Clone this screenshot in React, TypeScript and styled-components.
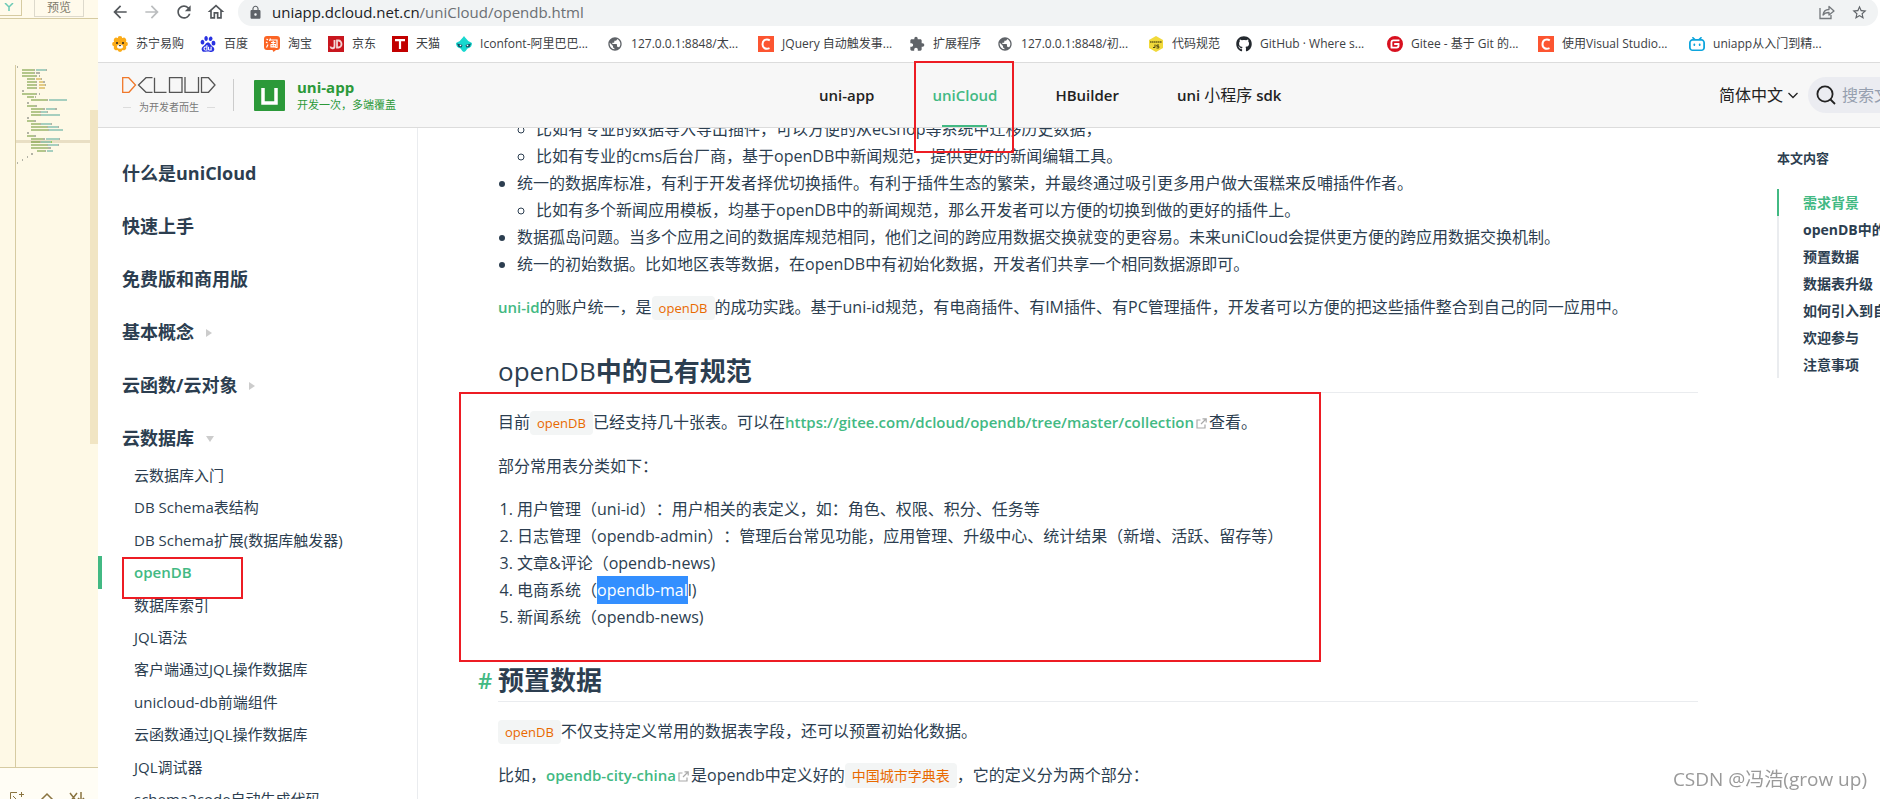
import React from 'react';
import styled, { createGlobalStyle } from 'styled-components';
import {
  MdArrowBack,
  MdArrowForward,
  MdRefresh,
  MdOutlineHome,
  MdLock,
  MdExtension,
  MdPublic,
  MdStarBorder,
} from 'react-icons/md';
import { SiBaidu, SiGitee, SiBilibili } from 'react-icons/si';
import { FaGithub } from 'react-icons/fa';

const GREEN = '#42b983';
const INK = '#2c3e50';
const LINE = '#eaecef';

const GlobalStyle = createGlobalStyle`
  *, *::before, *::after { box-sizing: border-box; }
  html, body, #root { height: 100%; }
  body {
    margin: 0;
    overflow: hidden;
    background: #fff;
    color: ${INK};
    font-family: 'Open Sans', 'Noto Sans', 'Noto Sans CJK SC', sans-serif;
    font-size: 16px;
    line-height: 27px;
    text-spacing-trim: space-all;
  }
  a { color: inherit; text-decoration: none; }
  button { font: inherit; color: inherit; background: none; border: 0; padding: 0; }
  ul, ol { margin: 0; padding: 0; }
  svg { display: block; flex-shrink: 0; }
`;

const Screen = styled.div`
  display: flex;
  height: 100vh;
  overflow: hidden;
`;

/* ---------- editor strip ---------- */

const Editor = styled.aside`
  display: flex;
  flex-direction: column;
  flex: 0 0 98px;
  background: #fef9e6;
  overflow: hidden;
`;

const EditorTabs = styled.div`
  display: flex;
  gap: 12px;
  height: 19px;
  flex-shrink: 0;
  border-bottom: 1px solid #d6cba2;
  background: #fffaeb;
`;

const FilterTab = styled.button`
  width: 22px;
  height: 16px;
  border-right: 1px solid #d6cba2;
  border-bottom: 1px solid #d6cba2;
`;

const PreviewTab = styled.button`
  width: 50px;
  height: 17px;
  border: 1px solid #ddd9cc;
  border-top: 0;
  color: #807a6c;
  font-size: 12px;
  line-height: 8px;
`;

const EditorBody = styled.div`
  display: flex;
  justify-content: space-between;
  flex: 1;
  min-height: 0;
`;

const Gutter = styled.div`
  flex: 1;
  margin-left: 15px;
  margin-top: 46px;
  border-left: 1px solid #d6cba2;
`;

const EditorThumb = styled.div`
  width: 8px;
  height: 334px;
  margin-top: 91px;
  background: #f1e5c3;
`;

const EditorFooter = styled.div`
  display: flex;
  gap: 14px;
  height: 32px;
  padding: 24px 0 0 9px;
  flex-shrink: 0;
  border-top: 1px solid #d6cba2;
  background: #fffdf5;
  color: #8a7440;
`;

type Seg = [number, number, string];
const G = '#b3c68a';
const S = '#b3b3a6';
const T = '#a6cfbf';
const Y = '#e3cb84';

const MAP: Seg[][] = [
  [[51, 54, S]],
  [[66, 102, G], [102, 105, S], [108, 138, T], [138, 141, S]],
  [[66, 102, G], [102, 105, S], [108, 120, S]],
  [[66, 108, G], [108, 111, S], [117, 120, S]],
  [[81, 102, G], [102, 105, S], [108, 123, Y], [123, 126, S]],
  [[81, 108, G], [108, 111, S], [117, 129, Y], [129, 135, S]],
  [[81, 108, G], [108, 111, S], [117, 135, Y], [135, 138, S]],
  [[81, 108, G], [108, 111, S], [117, 135, Y]],
  [[66, 72, S]],
  [[66, 108, G], [108, 111, S], [117, 120, S]],
  [[81, 102, G], [105, 108, S]],
  [[93, 141, G], [141, 144, S], [147, 201, T]],
  [[81, 87, S]],
  [[81, 105, G], [105, 111, S]],
  [[93, 129, G], [129, 135, S], [138, 165, T], [165, 171, S]],
  [[93, 120, G], [120, 123, S], [123, 141, T], [141, 144, S]],
  [[93, 120, G], [120, 123, S], [123, 180, T]],
  [[81, 87, S]],
  [[81, 102, G], [102, 108, S]],
  [[93, 120, G], [120, 123, S], [123, 153, T], [153, 156, S]],
  [[93, 141, G], [141, 144, S], [144, 174, T], [174, 177, S]],
  [[93, 144, G], [144, 147, S], [147, 189, T]],
  [[81, 87, S]],
  [[81, 102, G], [102, 108, S]],
  [[93, 129, G], [129, 135, S], [138, 177, T], [177, 180, S]],
  [[93, 120, '#a3b673'], [120, 123, S], [123, 153, '#9cc4ab'], [153, 156, '#8fce5a']],
  [[93, 141, G], [141, 144, S], [144, 174, T], [174, 177, S]],
  [[93, 144, G], [144, 153, S]],
  [[111, 135, G], [135, 138, S], [141, 159, T]],
  [[93, 99, S]],
  [[81, 84, S]],
  [[66, 69, S]],
  [[51, 54, S]],
];

/* ---------- browser chrome ---------- */

const Browser = styled.div`
  display: flex;
  flex-direction: column;
  flex: 1;
  min-width: 0;
`;

const Toolbar = styled.div`
  display: flex;
  align-items: center;
  height: 28px;
  margin-top: -2px;
  flex-shrink: 0;
  padding: 0 2px 0 12px;
  color: #5f6368;
`;

const ToolButton = styled.button<{ $dim?: boolean }>`
  display: flex;
  width: 20px;
  margin-right: 12px;
  color: ${(p) => (p.$dim ? '#bbbdbf' : '#53575b')};
`;

const Address = styled.div`
  display: flex;
  align-items: center;
  flex: 1;
  height: 28px;
  padding: 0 10px;
  border-radius: 14px;
  background: #f1f3f4;
`;

const AddressText = styled.span`
  flex: 1;
  margin-left: 9px;
  color: #6b6f73;
  font-size: 15px;
  line-height: 20px;
  b {
    color: #202124;
    font-weight: 400;
  }
`;

const AddressActions = styled.div`
  display: flex;
  gap: 16px;
`;

const Bookmarks = styled.nav`
  display: flex;
  align-items: center;
  gap: 16px;
  height: 37px;
  flex-shrink: 0;
  padding: 0 14px;
  border-bottom: 1px solid #dcdcdc;
  background: #fff;
`;

const Bookmark = styled.a<{ $long?: boolean }>`
  display: flex;
  align-items: center;
  gap: 8px;
  flex-shrink: 0;
  width: ${(p) => (p.$long ? '135px' : 'auto')};
  color: #3c4043;
  font-size: 12px;
  line-height: 16px;
  white-space: nowrap;
`;

/* ---------- site header ---------- */

const Header = styled.header`
  position: relative;
  z-index: 2;
  display: flex;
  align-items: center;
  height: 65px;
  flex-shrink: 0;
  border-bottom: 1px solid #dcdcdc;
  background: #f7f7f7;
`;

const Brand = styled.a`
  display: flex;
  align-items: center;
  flex: 0 0 721px;
  padding-left: 24px;
`;

const DcloudMark = styled.span`
  display: flex;
  flex-direction: column;
  align-items: center;
  width: 94px;
  gap: 8px;
`;

const Slogan = styled.span`
  display: flex;
  align-items: center;
  gap: 8px;
  color: #777;
  font-size: 10px;
  line-height: 12px;
  &::before,
  &::after {
    content: '';
    width: 8px;
    height: 1px;
    background: #dcdcdc;
  }
`;

const BrandRule = styled.span`
  width: 1px;
  height: 32px;
  margin: 0 20px 0 17px;
  background: #ccc;
`;

const BrandText = styled.span`
  display: flex;
  flex-direction: column;
  margin-left: 12px;
  color: #2b9939;
  font-size: 11px;
  line-height: 16px;
  b {
    font-size: 15px;
    line-height: 20px;
  }
`;

const SiteNav = styled.nav`
  display: flex;
  align-items: center;
  gap: 58px;
  height: 100%;
  color: #222;
  font-size: 15px;
  font-weight: 600;
  white-space: nowrap;
`;

const SiteLink = styled.a<{ $active?: boolean }>`
  position: relative;
  display: flex;
  align-items: center;
  gap: 4px;
  height: 64px;
  color: ${(p) => (p.$active ? GREEN : 'inherit')};
  em {
    font-size: 16px;
    font-style: normal;
    font-weight: 400;
  }
  &::after {
    content: '';
    display: ${(p) => (p.$active ? 'block' : 'none')};
    position: absolute;
    left: 10px;
    right: 10px;
    bottom: 0;
    height: 2px;
    background: ${GREEN};
  }
`;

const HeaderTools = styled.div`
  display: flex;
  align-items: center;
  gap: 10px;
  margin-left: auto;
`;

const Language = styled.button`
  display: flex;
  align-items: center;
  gap: 5px;
  color: #222;
  font-size: 16px;
`;

const Search = styled.label`
  display: flex;
  align-items: center;
  gap: 6px;
  width: 72px;
  height: 36px;
  padding-left: 8px;
  border-radius: 18px 0 0 18px;
  background: #ebecf1;
  input {
    flex: 1;
    min-width: 0;
    padding: 0;
    border: 0;
    outline: 0;
    background: none;
    font: inherit;
  }
  input::placeholder {
    color: #969faf;
    opacity: 1;
  }
`;

/* ---------- page body ---------- */

const Body = styled.div`
  display: flex;
  flex: 1;
  min-height: 0;
  overflow: hidden;
`;

const Sidebar = styled.nav`
  flex: 0 0 320px;
  padding-top: 19px;
  border-right: 1px solid ${LINE};
`;

const Group = styled.button`
  display: flex;
  align-items: center;
  gap: 12px;
  width: 100%;
  height: 53px;
  padding-left: 24px;
  font-size: 18px;
  font-weight: 700;
`;

const SubList = styled.ul`
  display: grid;
  grid-auto-rows: 1fr;
  height: 357px;
  margin-top: -6px;
  list-style: none;
`;

const SubItem = styled.li<{ $active?: boolean }>`
  position: relative;
  display: flex;
  align-items: center;
  padding-left: 32px;
  border-left: 4px solid ${(p) => (p.$active ? GREEN : 'transparent')};
  color: ${(p) => (p.$active ? GREEN : 'inherit')};
  font-size: 15px;
  font-weight: ${(p) => (p.$active ? 600 : 400)};
`;

const Main = styled.main`
  flex: 1;
  min-width: 0;
  margin-top: -12px;
  padding: 0 79px 0 80px;
  white-space: nowrap;
`;

const List = styled.ul`
  padding-left: 19px;
`;

const Continued = styled.li`
  list-style: none;
`;

const Numbered = styled.ol`
  padding-left: 19px;
`;

const Para = styled.p`
  margin: 16px 0;
`;

const Heading = styled.h2`
  position: relative;
  margin: 33px 0 16px;
  padding-bottom: 4px;
  border-bottom: 1px solid ${LINE};
  font-size: 26px;
  line-height: 33px;
  font-weight: 700;
  span {
    font-weight: 500;
  }
`;

const Hash = styled.a`
  position: absolute;
  left: -20px;
  color: ${GREEN};
  font-size: 22px;
  font-weight: 600;
`;

const Code = styled.code<{ $cjk?: boolean }>`
  padding: 3px 7px;
  border-radius: 4px;
  background: #f3f5f5;
  color: #e96900;
  font-family: inherit;
  font-size: ${(p) => (p.$cjk ? 14 : 13)}px;
`;

const DocLink = styled.a`
  color: ${GREEN};
  font-size: 15px;
  font-weight: 600;
  svg {
    display: inline-block;
    margin: 0 2px;
    vertical-align: -1px;
  }
`;

const Selected = styled.mark`
  padding: 3px 0;
  background: #338fff;
  color: #fff;
`;

const Section = styled.section`
  position: relative;
`;

const Toc = styled.nav`
  flex: 0 0 103px;
  padding-top: 17px;
  overflow: hidden;
  font-size: 14px;
  font-weight: 700;
  white-space: nowrap;
`;

const TocTitle = styled.div`
  margin-bottom: 17px;
  font-size: 13px;
`;

const TocItem = styled.a<{ $active?: boolean }>`
  display: block;
  padding-left: 24px;
  border-left: 2px solid ${(p) => (p.$active ? GREEN : LINE)};
  color: ${(p) => (p.$active ? GREEN : 'inherit')};
`;

/* ---------- overlays ---------- */

const Frame = styled.span<{ $top: number; $left: number; $width: number; $height: number }>`
  position: absolute;
  z-index: 3;
  top: ${(p) => p.$top}px;
  left: ${(p) => p.$left}px;
  width: ${(p) => p.$width}px;
  height: ${(p) => p.$height}px;
  border: 2px solid #ed1c24;
  pointer-events: none;
`;

const Watermark = styled.div`
  position: fixed;
  right: 13px;
  bottom: 6px;
  color: #999;
  font-size: 19px;
  line-height: 28px;
  text-shadow: 1px 1px 0 #fff;
`;

/* ---------- icons ---------- */

const Tile = ({ color, children }: { color: string; children: React.ReactNode }) => (
  <svg width="16" height="16" viewBox="0 0 16 16">
    <rect width="16" height="16" fill={color} />
    {children}
  </svg>
);

const LionIcon = () => (
  <svg width="16" height="16" viewBox="0 0 16 16">
    <g fill="#fbab18">
      <circle cx="8" cy="8" r="6.6" />
      {[0, 45, 90, 135, 180, 225, 270, 315].map((a) => (
        <circle key={a} cx="8" cy="2.4" r="2.3" transform={`rotate(${a} 8 8)`} />
      ))}
    </g>
    <ellipse cx="8" cy="10.6" rx="3" ry="2.2" fill="#fff" />
    <circle cx="5" cy="7" r="1" fill="#222" />
    <circle cx="11" cy="7" r="1" fill="#222" />
    <path d="M6.6 9h2.8L8 10.6z" fill="#222" />
  </svg>
);

const TaobaoIcon = () => (
  <svg width="16" height="16" viewBox="0 0 16 16">
    <path d="M3 0h10a3 3 0 013 3v8a3 3 0 01-3 3h-1l-2.500 2-1-2H3a3 3 0 01-3-3V3a3 3 0 013-3z" fill="#fb6424" />
    <path
      d="M2.500 3l1.500 1M2 6l1.500 1M2.500 11.500L4 8.500M6.500 2.500L5.500 5M6 4h7v7.500h-1.500M7 6.500h4.500M6.500 8.500H12M9.200 5v5.500M7 8.800v2h4.300v-2"
      fill="none"
      stroke="#fff"
      strokeWidth="1.200"
    />
  </svg>
);

const JdIcon = () => (
  <Tile color="#c8161e">
    <path d="M6.500 4v6a2 2 0 01-4 .5M9 4.500h1.500a3 3.500 0 010 7H9z" fill="none" stroke="#f3d6d6" strokeWidth="1.800" />
  </Tile>
);

const TmallIcon = () => (
  <Tile color="#c20000">
    <path d="M3 4.200h10M8 4.200V13" fill="none" stroke="#fff" strokeWidth="2.200" />
  </Tile>
);

const IconfontIcon = () => (
  <svg width="16" height="16" viewBox="0 0 16 16">
    <path d="M8 0c1 2 3 3 4.200 5L16 7c0 3-1.500 5-4.500 5.500C10.500 14 9.500 15.500 8 16c-1.500-.5-2.500-2-3.500-3.500C1.500 12 0 10 0 7l3.800-2C5 3 7 2 8 0z" fill="#19d8cf" />
    <path d="M1 7.500l5.500 1.500-1 2.500-3-.5zM15 7.500L9.500 9l1 2.500 3-.5z" fill="#164c63" />
    <circle cx="4.500" cy="9.500" r=".8" fill="#fff" />
    <circle cx="11.500" cy="9.500" r=".8" fill="#fff" />
  </svg>
);

const CsdnIcon = () => (
  <Tile color="#fc5531">
    <path d="M11.800 4.400C8.500 2.300 4.500 4 4.500 8.200c0 4 3.500 5.500 7 3.900" fill="none" stroke="#fff" strokeWidth="2" />
  </Tile>
);

const GlobeIcon = () => <MdPublic size={16} color="#5f6368" />;

const StandardIcon = () => (
  <svg width="16" height="16" viewBox="0 0 16 16">
    <path d="M8 0l7 4v8l-7 4-7-4V4z" fill="#f1d93a" />
    <path d="M2 6h12" stroke="#6a5f1a" strokeWidth="1.500" strokeDasharray="1.500 .4" />
    <path d="M7 8.500v3H5M11 9H8.800v1.300h2V12H8.500" fill="none" stroke="#4c4512" />
  </svg>
);

const ShareIcon = () => (
  <svg width="16" height="16" viewBox="0 0 16 16" fill="none" stroke="#74787c" strokeWidth="1.300">
    <path d="M1 4v10.500h11V11" />
    <path d="M4 11c.5-4 3-5.500 6-5.500V2.500L15 7l-5 4V8.500C7.500 8.500 5.500 9 4 11z" strokeLinejoin="round" />
  </svg>
);

const DcloudIcon = () => (
  <svg width="94" height="16" viewBox="0 0 94 16" fill="none" stroke="#555" strokeWidth="1.300">
    <path d="M.7.700h6L13.500 8 7 15.300H.7z" stroke="#f0782a" />
    <path d="M30.500.700H24L16.500 8 24 15.300h6.500M32.500.700v14.600h12M47.500.700H60v14.600H47.500zM63 0v15.300h13.500V0M79.500.700h7L93 8l-6.500 7.300h-7z" />
  </svg>
);

const UniIcon = () => (
  <svg width="31" height="31" viewBox="0 0 31 31">
    <rect width="31" height="31" rx="1" fill="#2b9939" />
    <path d="M9 8v15h13V8" fill="none" stroke="#fff" strokeWidth="3.500" />
  </svg>
);

const ExternalIcon = () => (
  <svg width="11" height="11" viewBox="0 0 11 11" fill="none" stroke="#aaa" strokeWidth="1.200">
    <path d="M4.500 2H1v8h8V6.500M6.500.800h3.700v3.700M10 1L5 6" />
  </svg>
);

const SearchIcon = () => (
  <svg width="20" height="20" viewBox="0 0 20 20" fill="none" stroke="#222" strokeWidth="1.800">
    <circle cx="9" cy="9" r="7.600" />
    <path d="M14.500 14.500L19 19" />
  </svg>
);

const Caret = ({ open }: { open?: boolean }) => (
  <svg width="8" height="8" viewBox="0 0 8 8" fill="#ccc">
    <path d={open ? 'M0 1h8L4 7z' : 'M0 0l6 4-6 4z'} />
  </svg>
);

/* ---------- data ---------- */

const bookmarks: { label: string; icon: React.ReactNode; long?: boolean }[] = [
  { label: '苏宁易购', icon: <LionIcon /> },
  { label: '百度', icon: <SiBaidu size={16} color="#2932e1" /> },
  { label: '淘宝', icon: <TaobaoIcon /> },
  { label: '京东', icon: <JdIcon /> },
  { label: '天猫', icon: <TmallIcon /> },
  { label: 'Iconfont-阿里巴巴...', icon: <IconfontIcon />, long: true },
  { label: '127.0.0.1:8848/太...', icon: <GlobeIcon />, long: true },
  { label: 'JQuery 自动触发事...', icon: <CsdnIcon />, long: true },
  { label: '扩展程序', icon: <MdExtension size={16} color="#5f6368" /> },
  { label: '127.0.0.1:8848/初...', icon: <GlobeIcon />, long: true },
  { label: '代码规范', icon: <StandardIcon /> },
  { label: 'GitHub · Where s...', icon: <FaGithub size={16} color="#24292f" />, long: true },
  { label: 'Gitee - 基于 Git 的...', icon: <SiGitee size={16} color="#d8101f" />, long: true },
  { label: '使用Visual Studio...', icon: <CsdnIcon />, long: true },
  { label: 'uniapp从入门到精...', icon: <SiBilibili size={16} color="#0ea5dd" />, long: true },
];

const groups: { label: string; state?: 'closed' | 'open' }[] = [
  { label: '什么是uniCloud' },
  { label: '快速上手' },
  { label: '免费版和商用版' },
  { label: '基本概念', state: 'closed' },
  { label: '云函数/云对象', state: 'closed' },
  { label: '云数据库', state: 'open' },
];

const subItems = [
  '云数据库入门',
  'DB Schema表结构',
  'DB Schema扩展(数据库触发器)',
  'openDB',
  '数据库索引',
  'JQL语法',
  '客户端通过JQL操作数据库',
  'unicloud-db前端组件',
  '云函数通过JQL操作数据库',
  'JQL调试器',
  'schema2code自动生成代码',
];

const toc = ['需求背景', 'openDB中的已有规范', '预置数据', '数据表升级', '如何引入到自己的项目', '欢迎参与', '注意事项'];

const EditorStrip = () => (
  <Editor>
    <EditorTabs>
      <FilterTab aria-label="筛选">
        <svg width="16" height="10" viewBox="0 0 16 10" fill="none" stroke="#6bc9b5" strokeWidth="1.500">
          <path d="M5 0l4 4 4-4M9 4v4" />
        </svg>
      </FilterTab>
      <PreviewTab>预览</PreviewTab>
    </EditorTabs>
    <EditorBody>
      <Gutter>
        <svg width="74" height="100" viewBox="48 15 222 300" shapeRendering="crispEdges">
          <rect x="48" y="240" width="222" height="9" fill="#e9dfc4" />
          {MAP.map((row, i) =>
            row.map(([from, to, fill]) => (
              <rect key={`${i}-${from}`} x={from} y={18 + i * 9} width={to - from} height="6" fill={fill} />
            )),
          )}
        </svg>
      </Gutter>
      <EditorThumb />
    </EditorBody>
    <EditorFooter>
      <svg width="16" height="16" viewBox="0 0 16 16" fill="none" stroke="currentColor">
        <path d="M8 .5H1.500V15H14V8M12.500 0v5M10 2.500h5M4 4l3 3-3 3" />
      </svg>
      <svg width="16" height="16" viewBox="0 0 16 16" fill="none" stroke="currentColor" strokeWidth="1.500">
        <path d="M2 8l6-6 6 6" />
      </svg>
      <svg width="16" height="16" viewBox="0 0 16 16" fill="none" stroke="currentColor" strokeWidth="1.500">
        <path d="M1 1l7 9M8 1l-7 9M12 0v9M9 6l3 3 3-3" />
      </svg>
    </EditorFooter>
  </Editor>
);

export default function App() {
  return (
    <Screen>
      <GlobalStyle />
      <EditorStrip />
      <Browser>
        <Toolbar>
          <ToolButton aria-label="后退"><MdArrowBack size={20} /></ToolButton>
          <ToolButton aria-label="前进" $dim><MdArrowForward size={20} /></ToolButton>
          <ToolButton aria-label="刷新"><MdRefresh size={20} /></ToolButton>
          <ToolButton aria-label="主页"><MdOutlineHome size={20} /></ToolButton>
          <Address>
            <MdLock size={15} />
            <AddressText><b>uniapp.dcloud.net.cn</b>/uniCloud/opendb.html</AddressText>
            <AddressActions>
              <ShareIcon />
              <MdStarBorder size={17} />
            </AddressActions>
          </Address>
        </Toolbar>
        <Bookmarks>
          {bookmarks.map((b) => (
            <Bookmark key={b.label} href="#" $long={b.long}>
              {b.icon}
              {b.label}
            </Bookmark>
          ))}
        </Bookmarks>
        <Header>
          <Brand href="#">
            <DcloudMark>
              <DcloudIcon />
              <Slogan>为开发者而生</Slogan>
            </DcloudMark>
            <BrandRule />
            <UniIcon />
            <BrandText>
              <b>uni-app</b>
              开发一次，多端覆盖
            </BrandText>
          </Brand>
          <SiteNav>
            <SiteLink href="#">uni-app</SiteLink>
            <SiteLink href="#" $active>
              uniCloud
              <Frame $top={-2} $left={-18} $width={100} $height={92} />
            </SiteLink>
            <SiteLink href="#">HBuilder</SiteLink>
            <SiteLink href="#">uni <em>小程序</em> sdk</SiteLink>
          </SiteNav>
          <HeaderTools>
            <Language>
              简体中文
              <svg width="10" height="7" viewBox="0 0 10 7" fill="none" stroke="#222" strokeWidth="1.300">
                <path d="M.5 1L5 5.500 9.500 1" />
              </svg>
            </Language>
            <Search>
              <SearchIcon />
              <input type="text" placeholder="搜索文档" aria-label="搜索文档" />
            </Search>
          </HeaderTools>
        </Header>
        <Body>
          <Sidebar>
            {groups.map((g) => (
              <Group key={g.label}>
                {g.label}
                {g.state && <Caret open={g.state === 'open'} />}
              </Group>
            ))}
            <SubList>
              {subItems.map((item) => (
                <SubItem key={item} $active={item === 'openDB'}>
                  <a href="#">{item}</a>
                  {item === 'openDB' && <Frame $top={1} $left={20} $width={121} $height={42} />}
                </SubItem>
              ))}
            </SubList>
          </Sidebar>
          <Main>
            <List>
              <Continued>
                <List>
                  <li>比如有专业的数据导入导出插件，可以方便的从ecshop等系统中迁移历史数据，</li>
                  <li>比如有专业的cms后台厂商，基于openDB中新闻规范，提供更好的新闻编辑工具。</li>
                </List>
              </Continued>
              <li>
                统一的数据库标准，有利于开发者择优切换插件。有利于插件生态的繁荣，并最终通过吸引更多用户做大蛋糕来反哺插件作者。
                <List>
                  <li>比如有多个新闻应用模板，均基于openDB中的新闻规范，那么开发者可以方便的切换到做的更好的插件上。</li>
                </List>
              </li>
              <li>数据孤岛问题。当多个应用之间的数据库规范相同，他们之间的跨应用数据交换就变的更容易。未来uniCloud会提供更方便的跨应用数据交换机制。</li>
              <li>统一的初始数据。比如地区表等数据，在openDB中有初始化数据，开发者们共享一个相同数据源即可。</li>
            </List>
            <Para>
              <DocLink href="#">uni-id</DocLink>的账户统一，是<Code>openDB</Code>的成功实践。基于uni-id规范，有电商插件、有IM插件、有PC管理插件，开发者可以方便的把这些插件整合到自己的同一应用中。
            </Para>
            <Heading><span>openDB</span>中的已有规范</Heading>
            <Section>
              <Frame $top={-17} $left={-39} $width={862} $height={270} />
              <Para>
                目前<Code>openDB</Code>已经支持几十张表。可以在
                <DocLink href="#">https://gitee.com/dcloud/opendb/tree/master/collection<ExternalIcon /></DocLink>查看。
              </Para>
              <Para>部分常用表分类如下：</Para>
              <Numbered>
                <li>用户管理（uni-id）：用户相关的表定义，如：角色、权限、积分、任务等</li>
                <li>日志管理（opendb-admin）：管理后台常见功能，应用管理、升级中心、统计结果（新增、活跃、留存等）</li>
                <li>文章&amp;评论（opendb-news)</li>
                <li>电商系统（<Selected>opendb-mal</Selected>l)</li>
                <li>新闻系统（opendb-news)</li>
              </Numbered>
            </Section>
            <Heading><Hash href="#">#</Hash>预置数据</Heading>
            <Para><Code>openDB</Code>不仅支持定义常用的数据表字段，还可以预置初始化数据。</Para>
            <Para>
              比如，<DocLink href="#">opendb-city-china<ExternalIcon /></DocLink>是opendb中定义好的<Code $cjk>中国城市字典表</Code>，它的定义分为两个部分：
            </Para>
          </Main>
          <Toc>
            <TocTitle>本文内容</TocTitle>
            {toc.map((item, i) => (
              <TocItem key={item} href="#" $active={i === 0}>{item}</TocItem>
            ))}
          </Toc>
        </Body>
      </Browser>
      <Watermark>CSDN @冯浩(grow up)</Watermark>
    </Screen>
  );
}
